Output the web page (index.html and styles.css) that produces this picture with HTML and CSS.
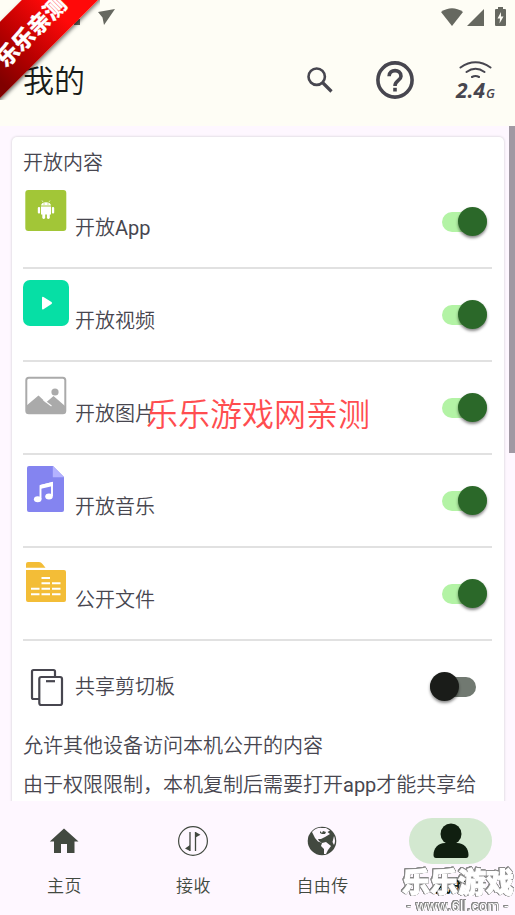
FILE: index.html
```html
<!DOCTYPE html>
<html lang="zh-CN">
<head>
<meta charset="utf-8">
<title>我的</title>
<link rel="stylesheet" href="styles.css">
</head>
<body>
<div class="app">
  <header class="header">
    <div class="status">
      <svg class="nav-arrow" width="41" height="17" viewBox="0 0 41 17"><path d="M24 3 41 0 30 16 28.500 8.500ZM0 10H6V16H0Z" fill="#666860"/></svg>
      <div class="status-icons">
        <svg width="22" height="18" viewBox="0 0 22 18"><path d="M0 4Q11-3.500 22 4L11 18Z" fill="#666860"/></svg>
        <svg width="17" height="17" viewBox="0 0 17 17"><path d="M17 0V17H0Z" fill="#666860"/></svg>
        <svg class="battery" width="11" height="19" viewBox="0 0 11 19"><path d="M3 0H8V2H10Q11 2 11 3V18Q11 19 10 19H1Q0 19 0 18V3Q0 2 1 2H3Z" fill="#666860"/><path d="M6 5 2.500 11.500H5L4.500 16.500 8.500 9.500H6Z" fill="#fefdf5"/></svg>
      </div>
    </div>
    <div class="toolbar">
      <h1>我的</h1>
      <svg class="search" width="26" height="26" viewBox="0 0 26 26" fill="none" stroke="#47464f"><circle cx="9.700" cy="9.700" r="8.200" stroke-width="2.600"/><path d="M15.500 15.500 24.500 24.500" stroke-width="3.200"/></svg>
      <svg class="help" width="38" height="38" viewBox="0 0 38 38" fill="none" stroke="#47464f" stroke-width="3.600"><circle cx="19" cy="19" r="17.100"/><path d="M13.100 15.200C13.100 7.700 25 7.700 25 15.200C25 19.500 19 19.500 19 25"/><path d="M19 26.800V30.500"/></svg>
      <div class="band">
        <svg width="33" height="18" viewBox="0 0 33 18" fill="none" stroke="#47464f" stroke-width="2.100" stroke-linecap="round"><path d="M1.500 6.500Q16.500-4 31.500 6.500M7.500 11Q16.500 4.500 25.500 11M13 16Q16.500 14 20 16"/></svg>
        <div class="band-text">2.4<small>G</small></div>
      </div>
    </div>
  </header>
  <main class="content">
    <section class="card">
      <h2>开放内容</h2>
      <div class="row">
        <svg class="icon" viewBox="0 0 46 46"><rect x="2.300" y="3" width="41" height="41" rx="3" fill="#a2c637"/><g fill="#fff"><path d="M18 18.500C18 14 28 14 28 18.500ZM18 19.500H28V27.500H18ZM19.300 27H22.200V31Q20.700 33 19.300 31ZM23.900 27H26.800V31Q25.300 33 23.900 31Z"/><rect x="14.800" y="20" width="2.300" height="6.500" rx="1"/><rect x="28.900" y="20" width="2.300" height="6.500" rx="1"/></g><path d="m20 15-1-1.500m7 1.500 1-1.500" stroke="#fff" stroke-width=".6"/><path d="M21 16.500v1m4-1v1" stroke="#a2c637"/></svg>
        <span class="label">开放<span class="latin">App</span></span><i class="switch"></i>
      </div>
      <div class="row">
        <svg class="icon" viewBox="0 0 46 46"><rect width="46" height="46" rx="7" fill="#06dfa5"/><path d="M19 18Q19 16.200 20.500 17L28.500 22Q29.800 23 28.500 24L20.500 29.200Q19 30 19 28.500Z" fill="#fff"/></svg>
        <span class="label">开放视频</span><i class="switch"></i>
      </div>
      <div class="row">
        <svg class="icon" viewBox="0 0 46 46"><rect x="3.300" y="4.800" width="39" height="35.500" rx="2.500" fill="none" stroke="#aaa" stroke-width="2"/><path d="M3 33 15.500 22.500 23 29.500 30.500 23 42 33V38Q42 40 40 40H5Q3 40 3 38Z" fill="#aaa"/><path d="m20.500 27 8 6" stroke="#fff" stroke-width="1.100"/><circle cx="32" cy="19" r="3.600" fill="#aaa"/></svg>
        <span class="label">开放图片</span><i class="switch"></i>
      </div>
      <div class="row">
        <svg class="icon" viewBox="0 0 46 46"><path d="M6 0H30L41 11V44Q41 46 39 46H6Q4 46 4 44V2Q4 0 6 0Z" fill="#8484f0"/><path d="M29.800 0 41 11.200H29.800Z" fill="#b4b2ff"/><path d="M17.500 33V20L29 17V30" stroke="#fff" stroke-width="1.900" fill="none"/><path d="M17 19 29.800 16V20L17 23Z" fill="#fff"/><ellipse cx="14.700" cy="33.200" rx="3.800" ry="3" fill="#fff"/><ellipse cx="26" cy="30.500" rx="3.800" ry="3" fill="#fff"/></svg>
        <span class="label">开放音乐</span><i class="switch"></i>
      </div>
      <div class="row">
        <svg class="icon" viewBox="0 0 46 46"><path d="M3 8.700V5Q3 3 5 3H16Q18 3 19.500 5L22.500 8.700ZM3 11H41Q43 11 43 13V41Q43 43 41 43H5Q3 43 3 41Z" fill="#f3bd37"/><path d="M18.500 19H27M18.500 24.300H27M29 24.300H37.500M8 29.800H16.500M18.500 29.800H27M29 29.800H37.500M8 35.200H16.500M18.500 35.200H27M29 35.200H37.500" stroke="#fff" stroke-width="2"/></svg>
        <span class="label">公开文件</span><i class="switch"></i>
      </div>
      <div class="row clipboard">
        <svg class="icon" viewBox="0 0 46 46" fill="none" stroke="#47464f" stroke-width="2.200"><path d="M16 35H10.500Q9 35 9 33.500V7.500Q9 6 10.500 6H30.500Q32 6 32 7.500V13"/><rect x="16.300" y="13" width="22.700" height="28" rx="2"/><path d="M23 17.200h9"/></svg>
        <span class="label">共享剪切板</span><i class="switch off"></i>
      </div>
      <p>允许其他设备访问本机公开的内容</p>
      <p>由于权限限制，本机复制后需要打开<span class="latin">app</span>才能共享给</p>
    </section>
    <div class="scrollbar"></div>
  </main>
  <nav class="nav">
    <div class="tab"><span class="pill"><svg width="30" height="30" viewBox="0 0 30 30"><path d="M15 2.500 29.500 15.500H25.500V27H18V18H12V27H5V15.500H.8Z" fill="#424940"/></svg></span><span>主页</span></div>
    <div class="tab"><span class="pill"><svg width="32" height="32" viewBox="0 0 32 32"><circle cx="16" cy="16" r="14.400" fill="none" stroke="#424940" stroke-width="1.200"/><path d="M13 7V26M18.500 26V7" stroke="#424940" stroke-width="1.300"/><path d="M13 20V26L8 23.500ZM18.500 7 23.500 9.800 18.500 12.500Z" fill="#424940"/></svg></span><span>接收</span></div>
    <div class="tab"><span class="pill"><svg width="30" height="30" viewBox="0 0 30 30"><circle cx="15" cy="15" r="14.300" fill="#424940"/><path d="M5 6Q10 1 15 2L19 2 23 4.500 20.500 6 23 8 18 11 14 13 11 13 12 15 15 17 11 15.500 8 12 6 8ZM15 17 19 16 24 20 21 24 19 28 17 28 17 23 14 20ZM27 10Q29 15 27 19L25.500 16Z" fill="#fef7ff"/><path d="m13 5 2 2 1-2 3 1-1 2h-3l-2-1Z" fill="#424940"/></svg></span><span>自由传</span></div>
    <div class="tab active"><span class="pill"><svg width="36" height="36" viewBox="0 0 36 36"><circle cx="18" cy="11" r="10.500" fill="#101f10"/><path d="M12 20H24C31 20 35.500 25 35.500 32Q35.500 35 33 35H3Q.5 35 .5 32C.5 25 5 20 12 20Z" fill="#101f10"/></svg></span><span>我的</span></div>
  </nav>
  <div class="ribbon"><div class="ribbon-band"><span>乐乐亲测</span></div></div>
  <div class="notice">乐乐游戏网亲测</div>
  <div class="mark"><b>乐乐游戏</b><span>- www.6ll.com -</span></div>
</div>
</body>
</html>
```
FILE: styles.css
```css
* { box-sizing: border-box; }
body { margin: 0; font-family: Roboto, "Noto Sans CJK SC", sans-serif; font-weight: 350; color: #47464f; }
.app { position: relative; width: 515px; height: 915px; overflow: hidden; display: flex; flex-direction: column; background: #fef7ff; }
svg { display: block; flex: none; }
.latin { font-weight: 400; }
.header { height: 126px; background: #fefdf5; flex: none; }
.status { height: 34px; display: flex; justify-content: space-between; padding: 8px 9px 0 74px; }
.nav-arrow { margin-top: 1px; }
.status-icons { display: flex; gap: 4px; }
.status-icons svg + svg { margin-top: 1px; }
.status-icons .battery { margin: -1px 0 0 7px; }
.toolbar { height: 92px; display: flex; align-items: center; padding: 0 19px 0 23px; }
h1 { margin: 4px 0 0; flex: 1; font-size: 31px; line-height: 40px; font-weight: inherit; color: #1a1c19; }
.search { margin-right: 43px; }
.help { margin-right: 41px; }
.band { width: 41px; height: 44px; margin-top: 5px; display: flex; flex-direction: column; align-items: center; }
.band-text { font: italic 700 21px/22px "Open Sans", sans-serif; display: flex; align-items: baseline; white-space: nowrap; }
.band-text small { font-size: 13px; font-weight: 600; margin-left: 1px; }
.content { height: 675px; flex: none; display: flex; justify-content: space-between; align-items: flex-start; padding: 11px 0 0 12px; overflow: hidden; }
.card { width: 492px; height: 700px; background: #fff; border-radius: 5px; padding: 9px 12px 0 11px; box-shadow: 0 0 2px 1px #e6e1e8; font-size: 20px; }
h2 { margin: 0; padding-top: 2px; height: 30px; font-size: 20px; line-height: 30px; font-weight: inherit; }
.row { height: 93px; display: flex; align-items: flex-start; border-bottom: 2px solid #e1e1e1; }
.icon { width: 46px; height: 46px; margin: 11px 6px 0 0; }
.label { flex: 1; line-height: 30px; margin-top: 37px; }
.switch { position: relative; width: 45px; height: 20px; margin: 36px 5px 0 0; border-radius: 10px; background: #b3f3a5; }
.switch::after { content: ""; position: absolute; right: 0; top: -5px; width: 29px; height: 29px; border-radius: 50%; background: #2b6829; box-shadow: 0 2px 3px #0007; }
.switch.off { background: #717971; margin-right: 16px; width: 46px; }
.switch.off::after { right: auto; left: 0; background: #1a1c19; }
.clipboard { height: 90px; border: 0; }
.clipboard .icon { margin-top: 23px; }
.clipboard .label { margin-top: 31px; }
p { margin: 0; line-height: 30px; white-space: nowrap; }
p + p { margin-top: 9px; }
.scrollbar { width: 6px; height: 327px; margin-top: -11px; background: #a099a3; }
.nav { flex: 1; display: flex; color: #424940; font-size: 17px; margin-left: -1px; }
.tab { width: 129px; flex: none; display: flex; flex-direction: column; align-items: center; padding-top: 17px; line-height: 26px; letter-spacing: .4px; }
.tab > span:last-child { padding-left: 2px; }
.pill { width: 83px; height: 46px; margin-bottom: 9px; border-radius: 23px; display: flex; justify-content: center; align-items: center; }
.pill svg { margin-top: -1px; }
.active { color: #101f10; font-weight: 700; }
.active .pill { background: #d3e8d0; }
.ribbon { position: absolute; left: 0; top: 0; width: 100px; height: 100px; overflow: hidden; }
.ribbon-band { position: absolute; left: -60px; top: 3px; width: 180px; height: 54px; transform: rotate(-45deg); background: linear-gradient(90deg, #800000 18%, #b80000 40%, #ff0909 68%); box-shadow: 0 2px 4px #0008; display: flex; justify-content: center; align-items: center; color: #fff; font-size: 22px; font-weight: 900; -webkit-text-stroke: .2px #fff; padding: 0 0 1px; }
.notice { position: absolute; left: 146px; top: 391px; color: #ff4d4f; font-size: 32px; line-height: 48px; white-space: nowrap; }
.mark { position: absolute; left: 401px; top: 868px; width: 114px; color: #fff; text-align: center; white-space: nowrap; filter: drop-shadow(.5px 0 0 #888) drop-shadow(-.5px 0 0 #888) drop-shadow(0 .5px 0 #888) drop-shadow(0 -.5px 0 #888); }
.mark b { display: block; font-size: 28px; line-height: 31px; font-weight: 900; -webkit-text-stroke: 1px #fff; }
.mark span { display: block; font: 14px/15px "Liberation Sans", sans-serif; letter-spacing: .5px; }
```
